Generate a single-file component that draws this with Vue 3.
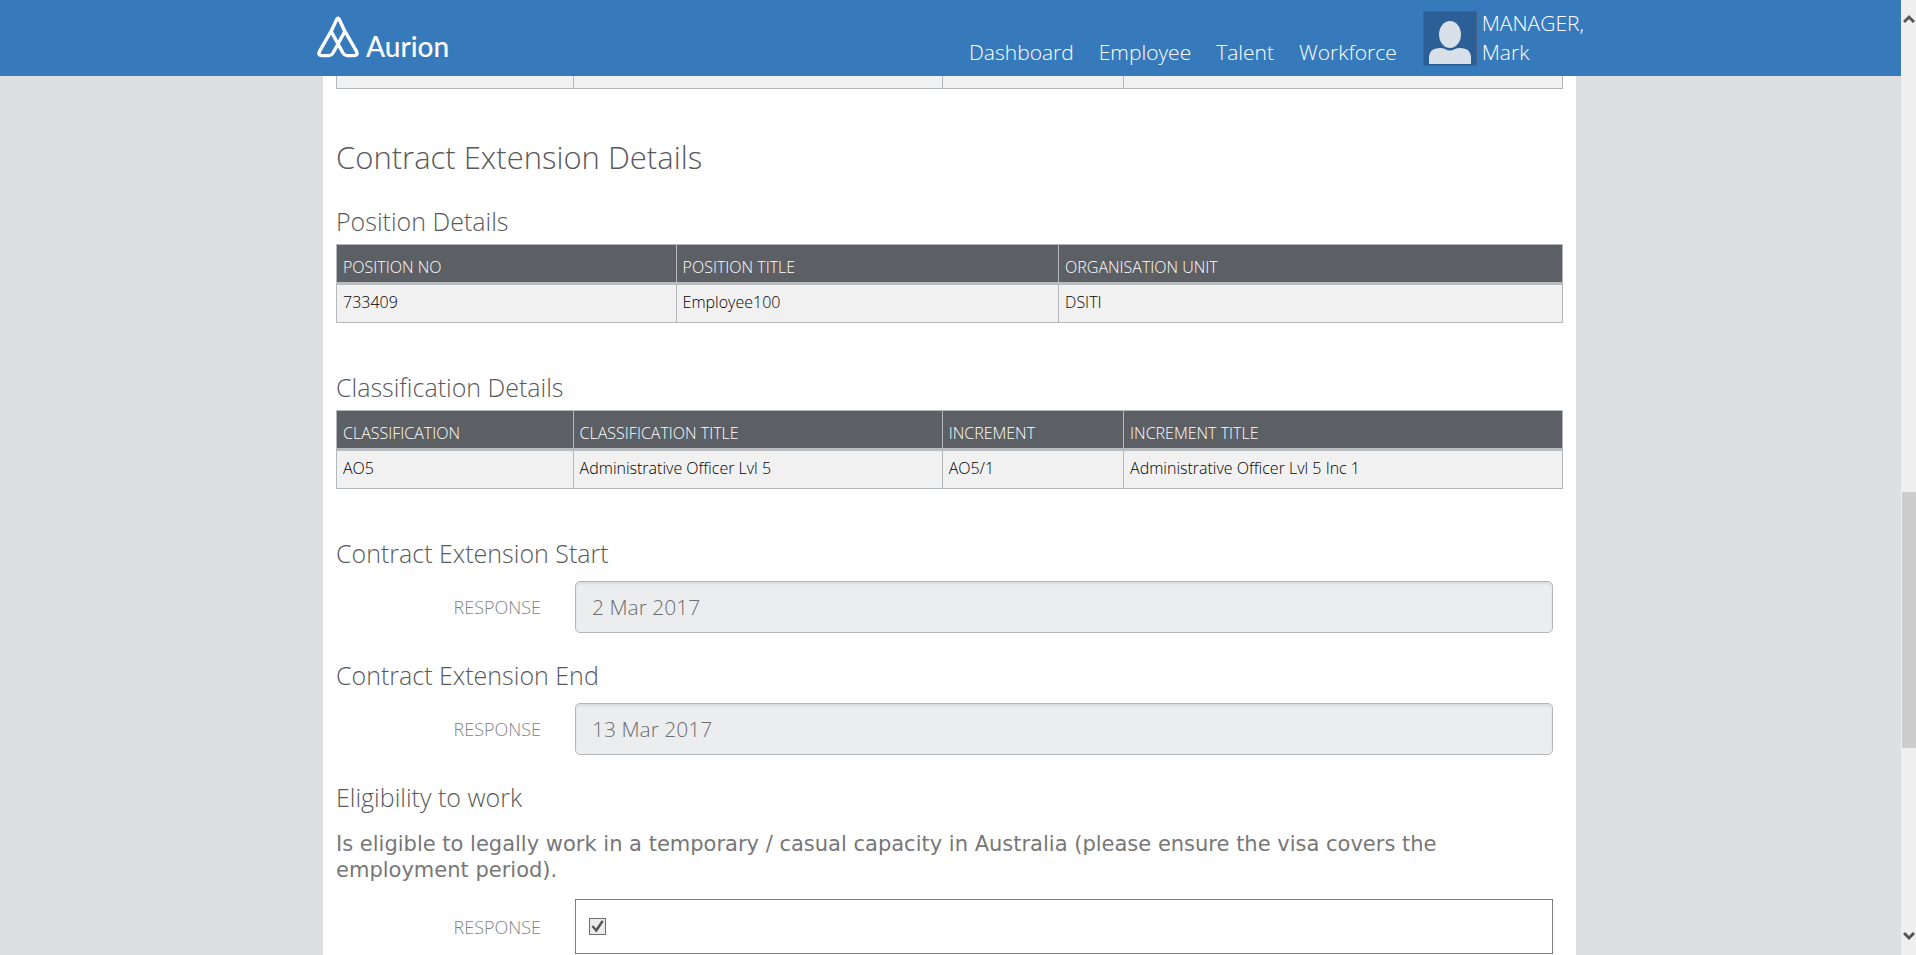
<script setup>
const navItems = ['Dashboard', 'Employee', 'Talent', 'Workforce']

const tables = [
  {
    title: 'Position Details',
    kind: 'position',
    headers: ['POSITION NO', 'POSITION TITLE', 'ORGANISATION UNIT'],
    row: ['733409', 'Employee100', 'DSITI']
  },
  {
    title: 'Classification Details',
    kind: 'classification',
    headers: ['CLASSIFICATION', 'CLASSIFICATION TITLE', 'INCREMENT', 'INCREMENT TITLE'],
    row: ['AO5', 'Administrative Officer Lvl 5', 'AO5/1', 'Administrative Officer Lvl 5 Inc 1']
  }
]

const dates = [
  { id: 'ext-start', title: 'Contract Extension Start', value: '2 Mar 2017' },
  { id: 'ext-end', title: 'Contract Extension End', value: '13 Mar 2017' }
]
</script>

<template>
  <div class="app">
    <div class="view">
      <header class="topbar">
        <div class="topbar-inner">
          <a class="brand" href="#">
            <svg class="mark" viewBox="0 0 42 42" width="42" height="42" aria-hidden="true">
              <g fill="none" stroke="#fff" stroke-width="3.4" stroke-linejoin="round" stroke-linecap="round">
                <path d="M14.5 14.5 L2.6 35.2 Q0.6 39.4 5 39.6 L12 39.6 Q14.6 39.4 16 37 L27.5 16" />
                <path d="M27.5 14.5 L39.4 35.2 Q41.4 39.4 37 39.6 L30 39.6 Q27.4 39.4 26 37 L14.5 16" />
                <path d="M14.5 14.5 L19 5 Q21 -0.4 23 5 L27.5 14.5" />
              </g>
            </svg>
            <span class="wordmark">Aurion</span>
          </a>
          <nav class="nav">
            <a v-for="item in navItems" :key="item" href="#">{{ item }}</a>
          </nav>
          <a class="user" href="#">
            <svg class="avatar" viewBox="0 0 54 55" width="54" height="55" aria-hidden="true">
              <rect x="0.5" y="0.5" width="53" height="54" fill="#2b5f95" stroke="#44648a" />
              <path d="M6 53 V47 Q6 37 17 37 Q20 37 22 38 Q27 41 32 38 Q34 37 37 37 Q48 37 48 47 V53 Z" fill="#d8e0ea" />
              <ellipse cx="27" cy="23.500" rx="11" ry="13.500" fill="#d8e0ea" />
            </svg>
            <span class="user-name">MANAGER,<br />Mark</span>
          </a>
        </div>
      </header>

      <main class="canvas">
        <article class="sheet">
          <table class="grid classification tail" aria-label="Previous classification">
            <tbody>
              <tr><td></td><td></td><td></td><td></td></tr>
            </tbody>
          </table>

          <h1>Contract Extension Details</h1>

          <section v-for="t in tables" :key="t.title" class="block">
            <h2>{{ t.title }}</h2>
            <table class="grid" :class="t.kind">
              <thead>
                <tr><th v-for="h in t.headers" :key="h" scope="col">{{ h }}</th></tr>
              </thead>
              <tbody>
                <tr><td v-for="c in t.row" :key="c">{{ c }}</td></tr>
              </tbody>
            </table>
          </section>

          <section v-for="d in dates" :key="d.id" class="question">
            <h2>{{ d.title }}</h2>
            <div class="field">
              <label :for="d.id">RESPONSE</label>
              <input :id="d.id" type="text" class="text-input" :value="d.value" disabled />
            </div>
          </section>

          <section class="question">
            <h2>Eligibility to work</h2>
            <p class="statement">
              Is eligible to legally work in a temporary / casual capacity in Australia (please ensure the visa covers the employment period).
            </p>
            <div class="field">
              <label for="eligible">RESPONSE</label>
              <div class="check-box">
                <input id="eligible" type="checkbox" checked disabled />
              </div>
            </div>
          </section>
        </article>
      </main>
    </div>

    <div class="scrollbar" aria-hidden="true">
      <svg class="arrow" viewBox="0 0 12 10" width="12" height="10"><path d="M1 8 L6 3 L11 8" /></svg>
      <div class="track"><div class="thumb"></div></div>
      <svg class="arrow" viewBox="0 0 12 10" width="12" height="10"><path d="M1 2 L6 7 L11 2" /></svg>
    </div>
  </div>
</template>

<style>
body {
  background: #dedfe1;
}
</style>

<style scoped>
.app {
  display: flex;
  height: 100vh;
  overflow: hidden;
  font-family: "Open Sans", "Noto Sans", sans-serif;
  font-weight: 300;
  color: #58595b;
}

.view {
  flex: 1;
  min-width: 0;
  display: flex;
  flex-direction: column;
}

.topbar {
  flex: none;
  background: #377abc;
}

.topbar-inner {
  box-sizing: border-box;
  max-width: 1267px;
  height: 76px;
  margin: 0 auto;
  display: flex;
  align-items: flex-start;
}

.topbar a {
  color: #fff;
  text-decoration: none;
}

.brand {
  display: flex;
  align-items: flex-end;
  gap: 7px;
  padding-top: 16px;
}

.mark {
  display: block;
}

.wordmark {
  font-family: Lato, sans-serif;
  font-weight: 500;
  font-size: 28px;
  line-height: 24px;
}

.nav {
  display: flex;
  gap: 25px;
  margin-left: auto;
  padding-top: 38px;
  font-size: 21px;
  line-height: 29px;
}

.user {
  display: flex;
  gap: 5px;
  margin-left: 26px;
  font-size: 21px;
  line-height: 29px;
}

.avatar {
  display: block;
  margin-top: 11px;
}

.user-name {
  padding-top: 9px;
}

.canvas {
  flex: 1;
  min-height: 0;
  overflow: hidden;
  padding-right: 2px;
  background: #dedfe1;
}

.sheet {
  box-sizing: border-box;
  max-width: 1253px;
  min-height: 100%;
  margin: 0 auto;
  padding: 0 13px;
  background: #fff;
}

h1 {
  margin: 46px 0 25px;
  font-size: 31px;
  line-height: 44px;
  font-weight: 300;
}

h2 {
  margin: 0;
  font-size: 25px;
  line-height: 34px;
  font-weight: 300;
}

.grid {
  width: 100%;
  table-layout: fixed;
  border-collapse: separate;
  border-spacing: 0;
  border: solid #b5b8ba;
  border-width: 1px 0 0 1px;
  font-size: 16px;
  line-height: 22px;
}

.block .grid {
  margin-top: 6px;
}

.block {
  margin-bottom: 47px;
}

.grid th,
.grid td {
  box-sizing: border-box;
  padding: 6px 6px 4px;
  text-align: left;
  vertical-align: top;
  font-weight: 300;
  border-right: 1px solid #b5b8ba;
}

.grid th {
  height: 40px;
  padding-top: 11px;
  background: #5c6064;
  color: #fff;
  border-bottom: 3px solid #b9bcbf;
}

.grid td {
  height: 38px;
  background: #f1f1f1;
  color: #000;
  border-bottom: 1px solid #b5b8ba;
}

.tail {
  border-top: 0;
}

.grid.tail td {
  height: 13px;
}

.position :is(th, td):nth-child(1) { width: 27.7%; }
.position :is(th, td):nth-child(2) { width: 31.2%; }
.classification :is(th, td):nth-child(1) { width: 19.3%; }
.classification :is(th, td):nth-child(2) { width: 30.1%; }
.classification :is(th, td):nth-child(3) { width: 14.8%; }

.question {
  margin-bottom: 25px;
}

.field {
  display: flex;
  align-items: center;
  gap: 34px;
  margin-top: 11px;
  padding-right: 10px;
}

.field label {
  flex: none;
  width: 205px;
  text-align: right;
  font-size: 18px;
  line-height: 24px;
  color: #808285;
}

.text-input {
  box-sizing: border-box;
  flex: 1;
  min-width: 0;
  height: 52px;
  margin: 0;
  padding: 0 16px;
  border: 1px solid #b5b8ba;
  border-radius: 5px;
  background: #ecedef;
  box-shadow: inset 0 2px 2px rgba(0, 0, 0, 0.08);
  font: inherit;
  font-size: 21px;
  color: #6d6e71;
}

.statement {
  margin: 17px 0 16px;
  font-family: "DejaVu Sans", Verdana, sans-serif;
  font-weight: 400;
  font-size: 21px;
  line-height: 26px;
  color: #777;
}

.statement + .field {
  margin-top: 0;
}

.check-box {
  box-sizing: border-box;
  flex: 1;
  height: 55px;
  padding-left: 13px;
  display: flex;
  align-items: center;
  border: 1px solid #7c7d80;
}

.check-box input {
  appearance: none;
  box-sizing: border-box;
  width: 17px;
  height: 17px;
  margin: 0;
  border: 1px solid #6c6c6c;
  background: #ececec;
  display: grid;
  place-items: center;
}

.check-box input:checked::before {
  content: "";
  width: 13px;
  height: 13px;
  background: #555;
  clip-path: polygon(4% 52%, 18% 40%, 38% 66%, 82% 2%, 98% 12%, 42% 96%);
}

.scrollbar {
  box-sizing: border-box;
  flex: none;
  width: 15px;
  padding: 14px 0 14px 1px;
  background: #efefef;
  display: flex;
  flex-direction: column;
  align-items: center;
}

.arrow {
  flex: none;
  display: block;
  fill: none;
  stroke: #555;
  stroke-width: 3;
}

.track {
  flex: 1;
  width: 100%;
  display: grid;
  grid-template-rows: 468fr 256fr 183fr;
}

.thumb {
  grid-row: 2;
  background: #cdcdcd;
}
</style>
